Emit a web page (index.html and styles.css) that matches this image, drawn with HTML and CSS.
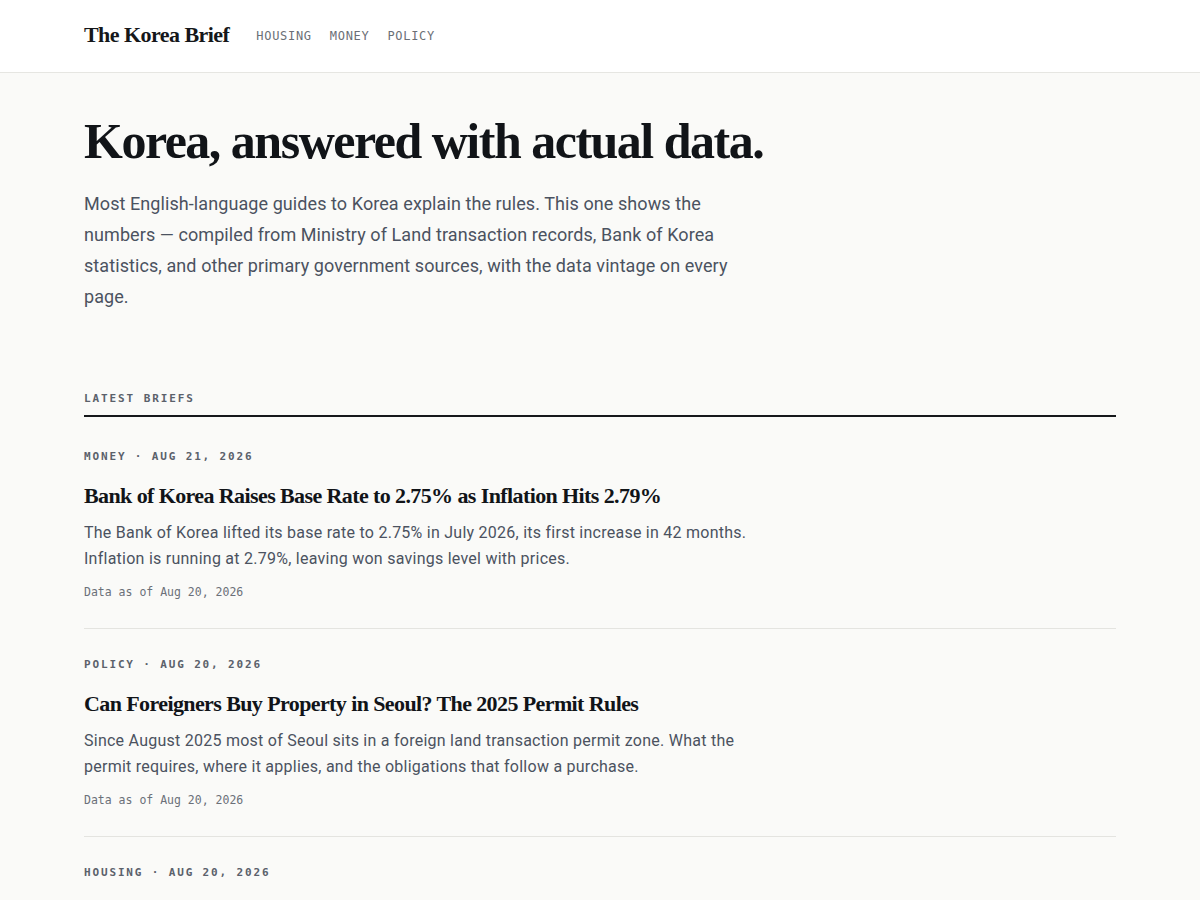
FILE: index.html
```html
<!DOCTYPE html>
<html lang="en">
<head>
<meta charset="utf-8">
<title>The Korea Brief</title>
<link rel="stylesheet" href="styles.css">
</head>
<body>
<header class="site-header">
  <div class="container header-inner">
    <a class="logo" href="#">The Korea Brief</a>
    <nav class="nav">
      <a href="#">HOUSING</a>
      <a href="#">MONEY</a>
      <a href="#">POLICY</a>
    </nav>
  </div>
</header>
<main class="container">
  <section class="hero">
    <h1>Korea, answered with actual data.</h1>
    <p>Most English-language guides to Korea explain the rules. This one shows the numbers — compiled from Ministry of Land transaction records, Bank of Korea statistics, and other primary government sources, with the data vintage on every page.</p>
  </section>
  <section class="briefs">
    <h2 class="section-title">LATEST BRIEFS</h2>
    <article class="brief">
      <div class="meta">MONEY · AUG 21, 2026</div>
      <h3 class="brief-title">Bank of Korea Raises Base Rate to 2.75% as Inflation Hits 2.79%</h3>
      <p class="brief-desc">The Bank of Korea lifted its base rate to 2.75% in July 2026, its first increase in 42 months. Inflation is running at 2.79%, leaving won savings level with prices.</p>
      <div class="vintage">Data as of Aug 20, 2026</div>
    </article>
    <article class="brief">
      <div class="meta">POLICY · AUG 20, 2026</div>
      <h3 class="brief-title">Can Foreigners Buy Property in Seoul? The 2025 Permit Rules</h3>
      <p class="brief-desc">Since August 2025 most of Seoul sits in a foreign land transaction permit zone. What the permit requires, where it applies, and the obligations that follow a purchase.</p>
      <div class="vintage">Data as of Aug 20, 2026</div>
    </article>
    <article class="brief brief-last">
      <div class="meta">HOUSING · AUG 20, 2026</div>
    </article>
  </section>
</main>
</body>
</html>
```

FILE: styles.css
```css
* { box-sizing: border-box; }
html, body { margin: 0; padding: 0; }
body {
  background: #fafaf8;
  color: #111418;
  font-family: Roboto, "Liberation Sans", sans-serif;
}
a { color: inherit; text-decoration: none; }
.container {
  max-width: 1032px;
  margin: 0 auto;
}
.site-header {
  background: #ffffff;
  border-bottom: 1px solid #e6e6e2;
}
.header-inner {
  height: 72px;
  display: flex;
  align-items: center;
  gap: 27px;
}
.logo {
  font-family: "Liberation Serif", "DejaVu Serif", serif;
  font-weight: 700;
  font-size: 22px;
  letter-spacing: -0.55px;
  color: #15171a;
  padding-bottom: 3px;
}
.nav {
  display: flex;
  gap: 18px;
}
.nav a {
  font-family: "DejaVu Sans Mono", "Liberation Mono", monospace;
  font-size: 12px;
  letter-spacing: 0.7px;
  color: #6b6f76;
}
.hero {
  padding-top: 40px;
}
.hero h1 {
  margin: 0;
  font-family: "Liberation Serif", "DejaVu Serif", serif;
  font-weight: 700;
  font-size: 50px;
  line-height: 56px;
  letter-spacing: -1.5px;
  color: #111418;
}
.hero p {
  margin: 19px 0 0;
  max-width: 680px;
  font-size: 18px;
  line-height: 31px;
  letter-spacing: 0.08px;
  color: #4b5260;
}
.briefs {
  margin-top: 79px;
}
.section-title {
  margin: 0 0 4px;
  padding-bottom: 8px;
  border-bottom: 2px solid #16181b;
  font-family: "DejaVu Sans Mono", "Liberation Mono", monospace;
  font-weight: 700;
  font-size: 11px;
  line-height: 16px;
  letter-spacing: 1.9px;
  color: #5b616b;
}
.brief {
  padding: 28px 0;
  border-bottom: 1px solid #e4e4e0;
}
.brief-last {
  border-bottom: 0;
  padding-bottom: 12px;
}
.meta {
  font-family: "DejaVu Sans Mono", "Liberation Mono", monospace;
  font-weight: 700;
  font-size: 11px;
  line-height: 16px;
  letter-spacing: 1.85px;
  color: #5b616b;
}
.brief-title {
  margin: 16px 0 9px;
  font-family: "Liberation Serif", "DejaVu Serif", serif;
  font-weight: 700;
  font-size: 22px;
  line-height: 30px;
  letter-spacing: -0.6px;
  color: #111418;
}
.brief-desc {
  margin: 0;
  max-width: 680px;
  font-size: 16px;
  line-height: 26px;
  letter-spacing: 0.25px;
  color: #4b5260;
}
.vintage {
  margin-top: 12px;
  font-family: "DejaVu Sans Mono", "Liberation Mono", monospace;
  font-size: 11.5px;
  line-height: 16px;
  color: #6b7079;
}
```
